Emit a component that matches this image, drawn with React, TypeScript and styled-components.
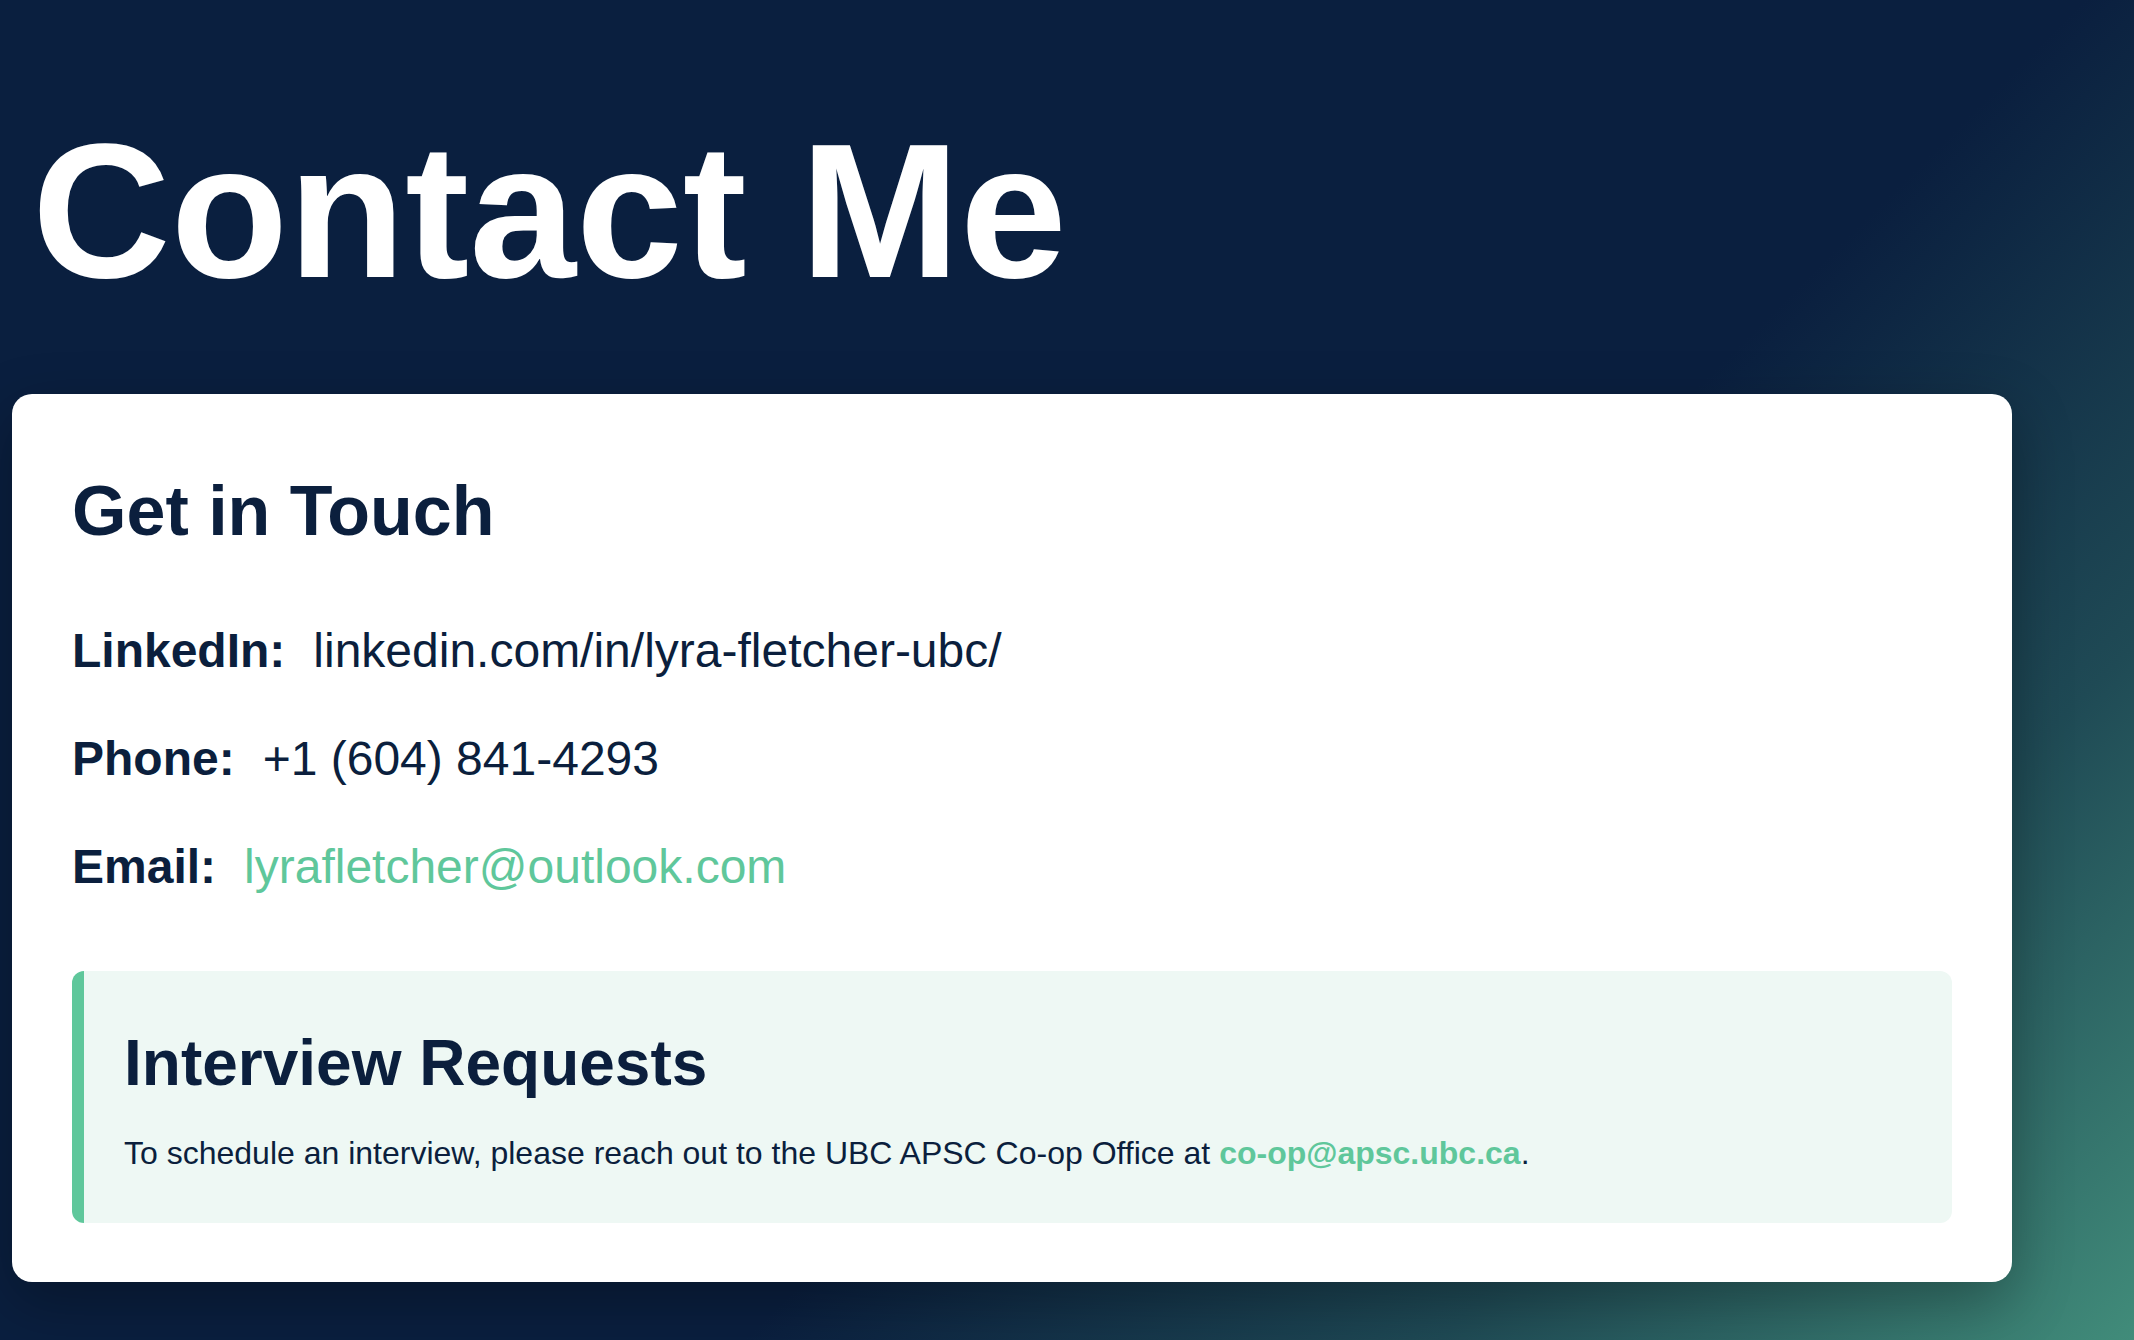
import React from "react";
import styled, { createGlobalStyle } from "styled-components";

const GlobalStyle = createGlobalStyle`
  html, body {
    margin: 0;
    padding: 0;
  }
  body {
    font-family: "Liberation Sans", Arial, Helvetica, sans-serif;
    background: #0a1f3f;
  }
  * { box-sizing: border-box; }
`;

const Page = styled.main`
  min-height: 100vh;
  padding: 115px 12px 40px 12px;
  background: linear-gradient(135deg, #0a1f3f 0%, #0a1f3f 60%, #1f4a55 80%, #418c7a 100%);
  color: #0b1f3d;
`;

const Title = styled.h1`
  margin: 0 0 87px 0;
  padding-left: 20px;
  font-size: 192px;
  line-height: 1;
  font-weight: 700;
  color: #ffffff;
`;

const Card = styled.section`
  width: 2000px;
  background: #ffffff;
  border-radius: 20px;
  padding: 75px 60px 59px 60px;
  box-shadow: 0 20px 60px rgba(0, 0, 0, 0.3);
`;

const CardHeading = styled.h2`
  margin: 0 0 62px 0;
  font-size: 70px;
  line-height: 84px;
  font-weight: 700;
  color: #0b1f3d;
`;

const InfoList = styled.div`
  display: flex;
  flex-direction: column;
  gap: 36px;
`;

const InfoRow = styled.div`
  display: flex;
  align-items: baseline;
  gap: 28px;
  font-size: 48px;
  line-height: 72px;
`;

const Label = styled.span`
  font-weight: 700;
  color: #0b1f3d;
`;

const Value = styled.span<{ $accent?: boolean }>`
  font-weight: 400;
  color: ${(p) => (p.$accent ? "#5fc79b" : "#0b1f3d")};
`;

const Notice = styled.div`
  margin-top: 68px;
  background: #eef8f4;
  border-left: 12px solid #5fc79b;
  border-radius: 12px;
  padding: 54px 40px 46px 40px;
`;

const NoticeHeading = styled.h3`
  margin: 0 0 27px 0;
  font-size: 64px;
  line-height: 76.8px;
  font-weight: 700;
  color: #0b1f3d;
`;

const NoticeText = styled.p`
  margin: 0;
  font-size: 32px;
  line-height: 48px;
  color: #0b1f3d;
`;

const Strong = styled.strong`
  font-weight: 700;
  color: #5fc79b;
`;

export default function App() {
  return (
    <>
      <GlobalStyle />
      <Page>
        <Title>Contact Me</Title>
        <Card>
          <CardHeading>Get in Touch</CardHeading>
          <InfoList>
            <InfoRow>
              <Label>LinkedIn:</Label>
              <Value>linkedin.com/in/lyra-fletcher-ubc/</Value>
            </InfoRow>
            <InfoRow>
              <Label>Phone:</Label>
              <Value>+1 (604) 841-4293</Value>
            </InfoRow>
            <InfoRow>
              <Label>Email:</Label>
              <Value $accent>lyrafletcher@outlook.com</Value>
            </InfoRow>
          </InfoList>
          <Notice>
            <NoticeHeading>Interview Requests</NoticeHeading>
            <NoticeText>
              To schedule an interview, please reach out to the UBC APSC Co-op Office at{" "}
              <Strong>co-op@apsc.ubc.ca</Strong>.
            </NoticeText>
          </Notice>
        </Card>
      </Page>
    </>
  );
}
